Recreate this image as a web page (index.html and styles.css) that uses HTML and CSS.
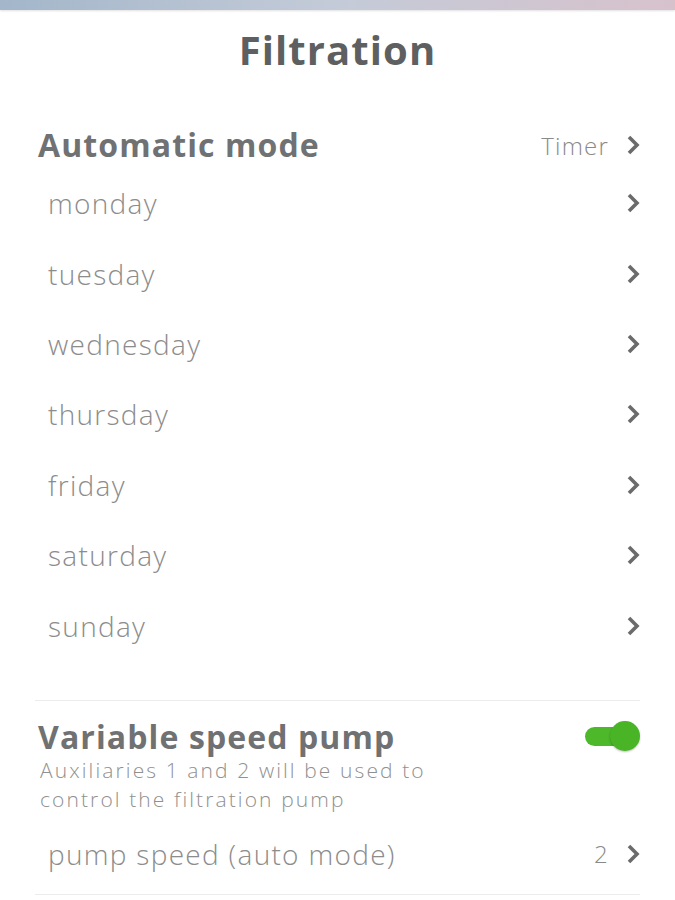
FILE: index.html
```html
<!DOCTYPE html>
<html lang="en">
<head>
  <meta charset="UTF-8">
  <meta name="viewport" content="width=device-width, initial-scale=1.0">
  <title>Filtration</title>
  <link rel="stylesheet" href="styles.css">
</head>
<body>
  <div class="topbar"></div>
  <h1 class="title">Filtration</h1>

  <div class="page">
    <div class="section">
      <div class="head-row">
        <span class="head">Automatic mode</span>
        <span class="value">Timer</span>
        <svg class="chev" viewBox="0 0 14 22"><path d="M3 3 L11 11 L3 19"/></svg>
      </div>
      <div class="row"><span class="label">monday</span><svg class="chev" viewBox="0 0 14 22"><path d="M3 3 L11 11 L3 19"/></svg></div>
      <div class="row"><span class="label">tuesday</span><svg class="chev" viewBox="0 0 14 22"><path d="M3 3 L11 11 L3 19"/></svg></div>
      <div class="row"><span class="label">wednesday</span><svg class="chev" viewBox="0 0 14 22"><path d="M3 3 L11 11 L3 19"/></svg></div>
      <div class="row"><span class="label">thursday</span><svg class="chev" viewBox="0 0 14 22"><path d="M3 3 L11 11 L3 19"/></svg></div>
      <div class="row"><span class="label">friday</span><svg class="chev" viewBox="0 0 14 22"><path d="M3 3 L11 11 L3 19"/></svg></div>
      <div class="row"><span class="label">saturday</span><svg class="chev" viewBox="0 0 14 22"><path d="M3 3 L11 11 L3 19"/></svg></div>
      <div class="row"><span class="label">sunday</span><svg class="chev" viewBox="0 0 14 22"><path d="M3 3 L11 11 L3 19"/></svg></div>
    </div>

    <div class="section bordered">
      <div class="head-row pump">
        <span class="head">Variable speed pump</span>
        <span class="toggle"><span class="knob"></span></span>
      </div>
      <p class="desc">Auxiliaries 1 and 2 will be used to<br>control the filtration pump</p>
      <div class="row speed"><span class="label">pump speed (auto mode)</span><span class="value">2</span><svg class="chev" viewBox="0 0 14 22"><path d="M3 3 L11 11 L3 19"/></svg></div>
    </div>
    <div class="line"></div>
  </div>
</body>
</html>
```

FILE: styles.css
```css
body {
  margin: 0;
  font-family: "Open Sans", "DejaVu Sans", sans-serif;
  background: #fff;
  color: #8c8c8c;
}
.topbar {
  height: 10px;
  background: linear-gradient(to right, #a3b6ca, #c4cbd8 50%, #d7c2cc);
  box-shadow: 0 1px 2px rgba(0, 0, 0, 0.12);
}
.title {
  margin: 16px 0 0;
  text-align: center;
  font-size: 40px;
  font-weight: 700;
  letter-spacing: 1.1px;
  color: #5d5f61;
  line-height: 48px;
}
.page {
  margin: 0 35px;
}
.section {
  padding-top: 48px;
}
.head-row {
  display: flex;
  align-items: center;
  height: 46px;
  padding-left: 3px;
}
.head {
  flex: 1;
  font-size: 32px;
  font-weight: 700;
  letter-spacing: 1.1px;
  line-height: 38px;
  color: #6f7173;
}
.value {
  font-size: 24px;
  font-weight: 300;
  letter-spacing: 1.2px;
  color: #8a8a8a;
  margin-right: 17px;
}
.chev {
  width: 14px;
  height: 22px;
  fill: none;
  stroke: #6b6b6b;
  stroke-width: 3.6;
}
.row {
  display: flex;
  align-items: center;
  height: 70.4px;
  padding-left: 13px;
}
.label {
  flex: 1;
  font-size: 28px;
  font-weight: 300;
  letter-spacing: 1.3px;
  color: #8c8c8c;
}
.bordered {
  margin-top: 39px;
  border-top: 1px solid #ececec;
  padding-top: 17px;
}
.pump {
  height: 38px;
}
.desc {
  margin: 0;
  padding-left: 5px;
  font-size: 21px;
  font-weight: 300;
  letter-spacing: 2.1px;
  line-height: 29px;
  color: #909090;
}
.speed {
  height: 80px;
}
.toggle {
  position: relative;
  width: 45px;
  height: 19px;
  margin-right: 10px;
  border-radius: 10px;
  background: #4cb82a;
}
.knob {
  position: absolute;
  right: -10px;
  top: -6px;
  width: 30px;
  height: 30px;
  border-radius: 50%;
  background: #48b426;
  box-shadow: 0 1px 2px rgba(0, 0, 0, 0.25);
}
.line {
  border-top: 1px solid #ececec;
}
```
